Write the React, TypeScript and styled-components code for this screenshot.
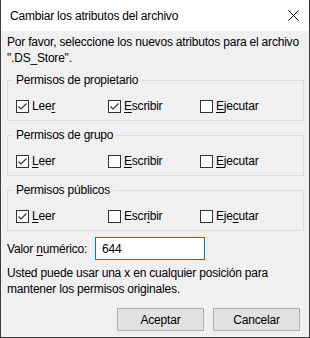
import React from "react";
import styled, { createGlobalStyle } from "styled-components";

const Global = createGlobalStyle`
  html, body { margin: 0; padding: 0; background: #ffffff; }
  body { font-family: "Liberation Sans", Arial, sans-serif; font-size: 12px; color: #000; letter-spacing: -0.2px; }
  * { box-sizing: border-box; }
`;

const Window = styled.div`
  width: 310px;
  height: 338px;
  border: 1px solid #3c3c3c;
  border-top: none;
  background: #f0f0f0;
  display: flex;
  flex-direction: column;
`;

const TitleBar = styled.div`
  height: 31px;
  background: #ffffff;
  display: flex;
  align-items: center;
  justify-content: space-between;
  padding: 0 10px 0 9px;
  font-size: 12px;
  line-height: 16px;
  flex-shrink: 0;
`;

const Body = styled.div`
  flex: 1;
  display: flex;
  flex-direction: column;
  padding: 3px 5px 6px 6px;
  line-height: 16px;
`;

const Paragraph = styled.p<{ $mt?: number }>`
  margin: ${(p) => p.$mt ?? 0}px 0 0 0;
  line-height: 16px;
`;

const Group = styled.fieldset`
  margin: 6px 0 0 0;
  padding: 10px 8px 6px 8px;
  border: 1px solid #dcdcdc;
  min-width: 0;
`;

const Legend = styled.legend`
  padding: 0 3px;
  margin-left: -3px;
  line-height: 16px;
`;

const Row = styled.div`
  display: grid;
  grid-template-columns: 92px 92px 1fr;
  height: 16px;
  align-items: center;
`;

const CheckLabel = styled.label`
  display: flex;
  align-items: center;
  gap: 3px;
  line-height: 16px;
`;

const Box = styled.span`
  width: 13px;
  height: 13px;
  border: 1px solid #333333;
  background: #ffffff;
  display: inline-flex;
  align-items: center;
  justify-content: center;
  flex-shrink: 0;
`;

const U = styled.span`
  text-decoration: underline;
  text-underline-offset: 2px;
`;

const ValueRow = styled.div`
  margin-top: 6px;
  display: flex;
  align-items: center;
`;

const ValueLabel = styled.span`
  width: 88px;
`;

const Input = styled.div`
  width: 110px;
  height: 23px;
  border: 1px solid #0078d7;
  background: #ffffff;
  padding: 0 6px;
  display: flex;
  align-items: center;
`;

const Buttons = styled.div`
  margin-top: auto;
  display: flex;
  justify-content: flex-end;
  gap: 9px;
  padding-right: 4px;
`;

const Button = styled.div`
  width: 87px;
  height: 23px;
  background: #e1e1e1;
  border: 1px solid #adadad;
  display: flex;
  align-items: center;
  justify-content: center;
`;

const Check = ({ checked }: { checked: boolean }) => (
  <Box>
    {checked && (
      <svg width="11" height="11" viewBox="0 0 11 11">
        <path d="M1.5 5.5 L4 8 L9.5 2.5" stroke="#333" strokeWidth="1.2" fill="none" />
      </svg>
    )}
  </Box>
);

type Item = { checked: boolean; label: React.ReactNode };

const PermRow = ({ items }: { items: Item[] }) => (
  <Row>
    {items.map((it, i) => (
      <CheckLabel key={i}>
        <Check checked={it.checked} />
        <span>{it.label}</span>
      </CheckLabel>
    ))}
  </Row>
);

export default function App() {
  return (
    <>
      <Global />
      <Window>
        <TitleBar>
          <span>Cambiar los atributos del archivo</span>
          <svg width="11" height="11" viewBox="0 0 11 11">
            <path d="M0.5 0.5 L10.5 10.5 M10.5 0.5 L0.5 10.5" stroke="#000" strokeWidth="1" fill="none" />
          </svg>
        </TitleBar>
        <Body>
          <Paragraph>
            Por favor, seleccione los nuevos atributos para el archivo ".DS_Store".
          </Paragraph>
          <Group>
            <Legend>Permisos de propietario</Legend>
            <PermRow
              items={[
                { checked: true, label: <>Lee<U>r</U></> },
                { checked: true, label: <><U>E</U>scribir</> },
                { checked: false, label: <><U>E</U>jecutar</> },
              ]}
            />
          </Group>
          <Group>
            <Legend>Permisos de grupo</Legend>
            <PermRow
              items={[
                { checked: true, label: <><U>L</U>eer</> },
                { checked: false, label: <><U>E</U>scribir</> },
                { checked: false, label: <><U>E</U>jecutar</> },
              ]}
            />
          </Group>
          <Group>
            <Legend>Permisos públicos</Legend>
            <PermRow
              items={[
                { checked: true, label: <><U>L</U>eer</> },
                { checked: false, label: <>Escr<U>i</U>bir</> },
                { checked: false, label: <>Eje<U>c</U>utar</> },
              ]}
            />
          </Group>
          <ValueRow>
            <ValueLabel>
              Valor <U>n</U>umérico:
            </ValueLabel>
            <Input>644</Input>
          </ValueRow>
          <Paragraph $mt={5}>
            Usted puede usar una x en cualquier posición para mantener los permisos originales.
          </Paragraph>
          <Buttons>
            <Button>Aceptar</Button>
            <Button>Cancelar</Button>
          </Buttons>
        </Body>
      </Window>
    </>
  );
}
